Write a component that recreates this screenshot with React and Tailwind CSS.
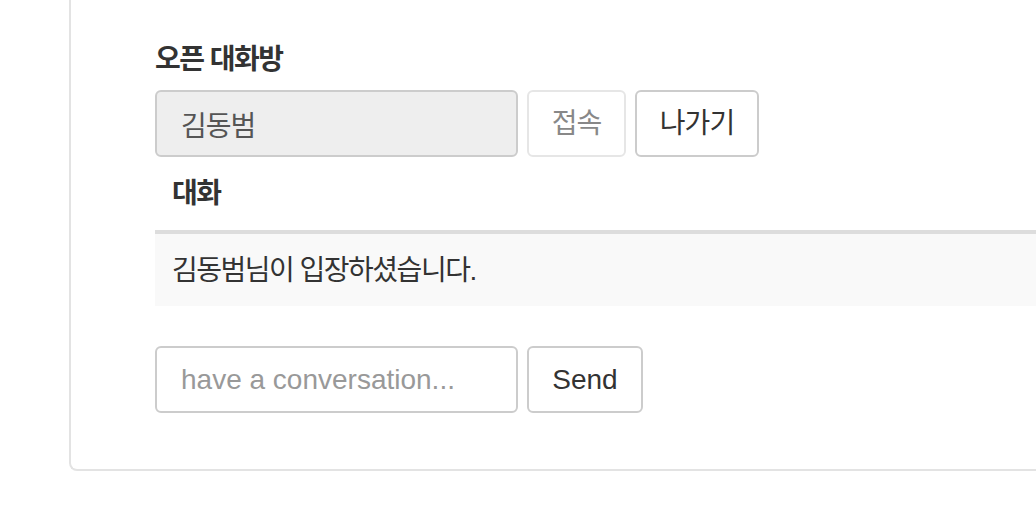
import { useState } from "react";

const font = { fontFamily: '"Liberation Sans", "Noto Sans CJK KR", sans-serif' };

function ChatRoom() {
  const [message, setMessage] = useState("");

  return (
    <div className="h-[528px] w-[1036px] overflow-hidden bg-white pl-[69px] text-[#333]" style={font}>
      {/* Panel */}
      <div className="w-[1100px] rounded-bl-lg border-b-2 border-l-2 border-[#e3e3e3] pb-[56px] pl-[84px] pt-[40px]">
        <h4 className="mb-[10px] text-[28px] font-bold leading-[40px] tracking-[-1.5px]">오픈 대화방</h4>

        {/* Room row */}
        <div className="flex gap-[9px]">
          <input
            type="text"
            value="김동범"
            disabled
            readOnly
            className="h-[67px] w-[363px] rounded-md border-2 border-[#ccc] bg-[#eee] px-[24px] text-[28px] tracking-[-1px] text-[#555]"
          />
          <button
            disabled
            className="h-[67px] w-[99px] rounded-md border-2 border-[#e6e6e6] bg-white text-[28px] tracking-[-1px] text-[#888]"
          >
            접속
          </button>
          <button className="h-[67px] w-[124px] rounded-md border-2 border-[#ccc] bg-white text-[28px] tracking-[-1px] text-[#333]">
            나가기
          </button>
        </div>

        {/* Conversation */}
        <h5 className="mt-[17px] pl-[17px] text-[28px] font-bold leading-[40px] tracking-[-1.5px]">대화</h5>
        <div className="mt-[16px] flex h-[76px] items-center border-t-4 border-[#ddd] bg-[#f9f9f9] pl-[17px] pt-[2px] text-[28px] tracking-[-1.5px]">
          김동범님이 입장하셨습니다.
        </div>

        {/* Send row */}
        <div className="mt-[40px] flex gap-[9px]">
          <input
            type="text"
            value={message}
            onChange={(e) => setMessage(e.target.value)}
            placeholder="have a conversation..."
            className="h-[67px] w-[363px] rounded-md border-2 border-[#ccc] px-[24px] text-[28px] text-[#555] placeholder:text-[#999]"
          />
          <button className="h-[67px] w-[116px] rounded-md border-2 border-[#ccc] bg-white text-[28px] text-[#333]">
            Send
          </button>
        </div>
      </div>
    </div>
  );
}

export default function App() {
  return <ChatRoom />;
}
